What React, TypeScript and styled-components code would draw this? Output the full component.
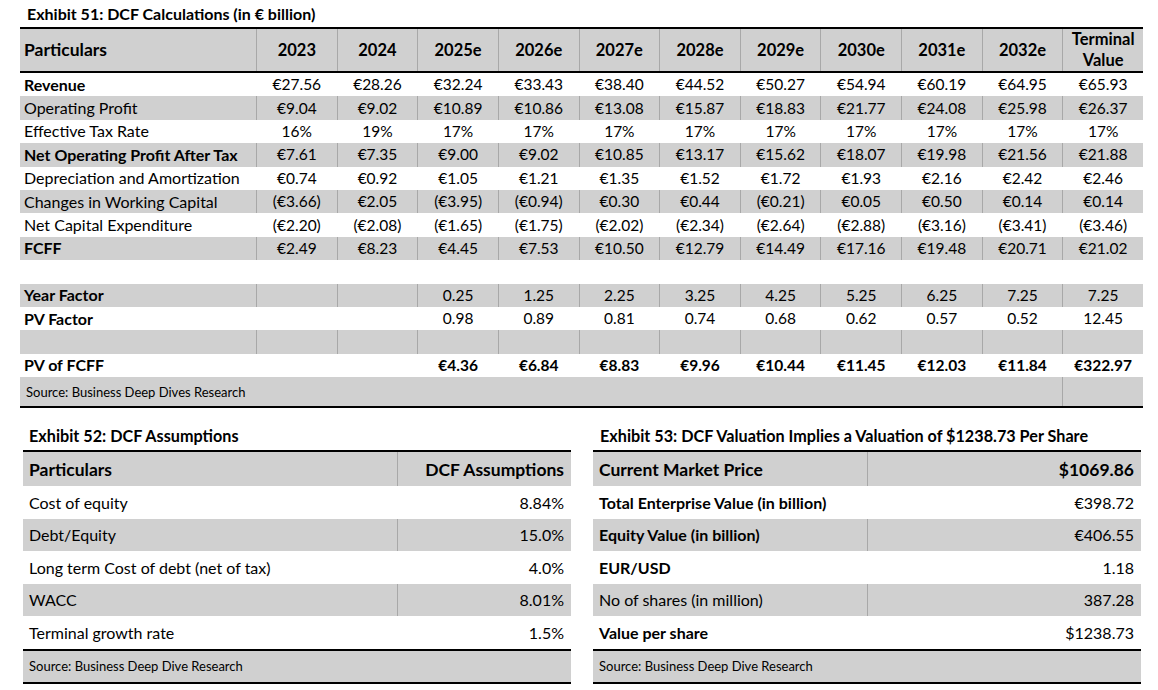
import styled, { createGlobalStyle } from 'styled-components';

const SHADE = '#d0d0d0';
const RULE = '#a8a8a8';

const GlobalStyle = createGlobalStyle`
  body {
    margin: 0;
    background: #ffffff;
    color: #000000;
    font-family: Lato, 'Liberation Sans', sans-serif;
  }
`;

type CalcRowData = {
  label: string;
  values: string[];
  shade?: boolean;
  bold?: boolean;
  boldValues?: boolean;
};

const years = ['2023', '2024', '2025e', '2026e', '2027e', '2028e', '2029e', '2030e', '2031e', '2032e'];
const empty = Array(11).fill('');

const calcRows: CalcRowData[] = [
  { label: 'Revenue', bold: true, values: ['€27.56', '€28.26', '€32.24', '€33.43', '€38.40', '€44.52', '€50.27', '€54.94', '€60.19', '€64.95', '€65.93'] },
  { label: 'Operating Profit', shade: true, values: ['€9.04', '€9.02', '€10.89', '€10.86', '€13.08', '€15.87', '€18.83', '€21.77', '€24.08', '€25.98', '€26.37'] },
  { label: 'Effective Tax Rate', values: ['16%', '19%', '17%', '17%', '17%', '17%', '17%', '17%', '17%', '17%', '17%'] },
  { label: 'Net Operating Profit After Tax', bold: true, shade: true, values: ['€7.61', '€7.35', '€9.00', '€9.02', '€10.85', '€13.17', '€15.62', '€18.07', '€19.98', '€21.56', '€21.88'] },
  { label: 'Depreciation and Amortization', values: ['€0.74', '€0.92', '€1.05', '€1.21', '€1.35', '€1.52', '€1.72', '€1.93', '€2.16', '€2.42', '€2.46'] },
  { label: 'Changes in Working Capital', shade: true, values: ['(€3.66)', '€2.05', '(€3.95)', '(€0.94)', '€0.30', '€0.44', '(€0.21)', '€0.05', '€0.50', '€0.14', '€0.14'] },
  { label: 'Net Capital Expenditure', values: ['(€2.20)', '(€2.08)', '(€1.65)', '(€1.75)', '(€2.02)', '(€2.34)', '(€2.64)', '(€2.88)', '(€3.16)', '(€3.41)', '(€3.46)'] },
  { label: 'FCFF', bold: true, shade: true, values: ['€2.49', '€8.23', '€4.45', '€7.53', '€10.50', '€12.79', '€14.49', '€17.16', '€19.48', '€20.71', '€21.02'] },
  { label: '', values: empty },
  { label: 'Year Factor', bold: true, shade: true, values: ['', '', '0.25', '1.25', '2.25', '3.25', '4.25', '5.25', '6.25', '7.25', '7.25'] },
  { label: 'PV Factor', bold: true, values: ['', '', '0.98', '0.89', '0.81', '0.74', '0.68', '0.62', '0.57', '0.52', '12.45'] },
  { label: '', shade: true, values: empty },
  { label: 'PV of FCFF', bold: true, boldValues: true, values: ['', '', '€4.36', '€6.84', '€8.83', '€9.96', '€10.44', '€11.45', '€12.03', '€11.84', '€322.97'] },
];

const assumptions = [
  ['Cost of equity', '8.84%'],
  ['Debt/Equity', '15.0%'],
  ['Long term Cost of debt (net of tax)', '4.0%'],
  ['WACC', '8.01%'],
  ['Terminal growth rate', '1.5%'],
];

const valuation: { label: string; value: string; bold: boolean }[] = [
  { label: 'Total Enterprise Value (in billion)', value: '€398.72', bold: true },
  { label: 'Equity Value (in billion)', value: '€406.55', bold: true },
  { label: 'EUR/USD', value: '1.18', bold: true },
  { label: 'No of shares (in million)', value: '387.28', bold: false },
  { label: 'Value per share', value: '$1238.73', bold: true },
];

const App = () => {
  return (
    <Page>
      <GlobalStyle />
      <TopSection>
        <Title>Exhibit 51: DCF Calculations (in € billion)</Title>
        <CalcTable>
          <CalcHead $shade>
            <Label $bold $size={17.5}>Particulars</Label>
            {years.map((y) => (
              <Value key={y} $bold $size={16.5}>{y}</Value>
            ))}
            <Value $bold $size={16.5}>Terminal<br />Value</Value>
          </CalcHead>
          {calcRows.map((row, i) => (
            <CalcRow key={i} $shade={row.shade}>
              <Label $bold={row.bold}>{row.label}</Label>
              {row.values.map((v, j) => (
                <Value key={j} $bold={row.boldValues}>{v}</Value>
              ))}
            </CalcRow>
          ))}
          <SourceRow $shade>
            <SourceText>Source: Business Deep Dives Research</SourceText>
            <div />
          </SourceRow>
        </CalcTable>
      </TopSection>

      <BottomSection>
        <Exhibit>
          <SmallTitle>Exhibit 52: DCF Assumptions</SmallTitle>
          <BoxTable>
            <BoxHead $cols='374px 1fr' $shade>
              <BoxLabel $bold $size={17.5}>Particulars</BoxLabel>
              <BoxValue $bold $size={17.5}>DCF Assumptions</BoxValue>
            </BoxHead>
            {assumptions.map(([label, value], i) => (
              <BoxRow key={label} $cols='374px 1fr' $shade={i % 2 === 1}>
                <BoxLabel>{label}</BoxLabel>
                <BoxValue>{value}</BoxValue>
              </BoxRow>
            ))}
            <BoxSource>Source: Business Deep Dive Research</BoxSource>
          </BoxTable>
        </Exhibit>

        <Exhibit>
          <SmallTitle $indent={7}>Exhibit 53: DCF Valuation Implies a Valuation of $1238.73 Per Share</SmallTitle>
          <BoxTable>
            <BoxHead $cols='274px 1fr' $shade>
              <BoxLabel $bold $size={17.5}>Current Market Price</BoxLabel>
              <BoxValue $bold $size={17.5}>$1069.86</BoxValue>
            </BoxHead>
            {valuation.map((row, i) => (
              <BoxRow key={row.label} $cols='274px 1fr' $shade={i % 2 === 1}>
                <BoxLabel $bold={row.bold}>{row.label}</BoxLabel>
                <BoxValue>{row.value}</BoxValue>
              </BoxRow>
            ))}
            <BoxSource>Source: Business Deep Dive Research</BoxSource>
          </BoxTable>
        </Exhibit>
      </BottomSection>
    </Page>
  );
};

const Page = styled.main`
  width: 1158px;
  height: 690px;
  overflow: hidden;
`;

const TopSection = styled.section`
  padding: 0 15px 0 20px;
`;

const Title = styled.h2`
  margin: 0;
  height: 27px;
  display: flex;
  align-items: center;
  padding-left: 7px;
  font-size: 16px;
  font-weight: 700;
`;

const CalcTable = styled.div`
  border-top: 2px solid #000;
  border-bottom: 2px solid #000;
`;

const CalcRow = styled.div<{ $shade?: boolean }>`
  display: grid;
  grid-template-columns: 236px repeat(11, 1fr);
  height: 23.4px;
  background: ${(p) => (p.$shade ? SHADE : '#ffffff')};

  & > * + * {
    border-left: 1px solid ${(p) => (p.$shade ? RULE : 'transparent')};
  }
`;

const CalcHead = styled(CalcRow)`
  height: 42px;
  border-bottom: 2px solid #000;
`;

const SourceRow = styled(CalcRow)`
  height: 29px;

  & > :first-child {
    grid-column: 1 / span 11;
  }
`;

const Label = styled.div<{ $bold?: boolean; $size?: number }>`
  display: flex;
  align-items: center;
  padding-left: 4px;
  white-space: nowrap;
  line-height: 20px;
  font-size: ${(p) => p.$size ?? 16}px;
  font-weight: ${(p) => (p.$bold ? 700 : 400)};
`;

const Value = styled.div<{ $bold?: boolean; $size?: number }>`
  display: flex;
  align-items: center;
  justify-content: center;
  text-align: center;
  white-space: nowrap;
  line-height: 21px;
  font-size: ${(p) => p.$size ?? 15.5}px;
  font-weight: ${(p) => (p.$bold ? 700 : 400)};
`;

const SourceText = styled.div`
  display: flex;
  align-items: center;
  padding-left: 6px;
  font-size: 13px;
`;

const BottomSection = styled.section`
  display: grid;
  grid-template-columns: 548px 548px;
  column-gap: 22px;
  padding-left: 23px;
  margin-top: 12px;
`;

const Exhibit = styled.div`
  display: flex;
  flex-direction: column;
`;

const SmallTitle = styled.h3<{ $indent?: number }>`
  margin: 0;
  height: 30px;
  display: flex;
  align-items: center;
  padding-left: ${(p) => p.$indent ?? 6}px;
  font-size: 16.2px;
  font-weight: 700;
  white-space: nowrap;
`;

const BoxTable = styled.div`
  border-top: 2px solid #000;
`;

const BoxRow = styled.div<{ $cols: string; $shade?: boolean }>`
  display: grid;
  grid-template-columns: ${(p) => p.$cols};
  height: 32.5px;
  background: ${(p) => (p.$shade ? SHADE : '#ffffff')};

  & > * + * {
    border-left: 1px solid ${(p) => (p.$shade ? RULE : 'transparent')};
  }
`;

const BoxHead = styled(BoxRow)`
  height: 34px;
`;

const BoxLabel = styled.div<{ $bold?: boolean; $size?: number }>`
  display: flex;
  align-items: center;
  padding-left: 6px;
  white-space: nowrap;
  font-size: ${(p) => p.$size ?? 16}px;
  font-weight: ${(p) => (p.$bold ? 700 : 400)};
`;

const BoxValue = styled(BoxLabel)`
  justify-content: flex-end;
  padding: 0 7px 0 0;
`;

const BoxSource = styled.div`
  height: 31px;
  display: flex;
  align-items: center;
  padding-left: 6px;
  background: ${SHADE};
  border-top: 2px solid #000;
  border-bottom: 2px solid #000;
  font-size: 13px;
`;

export default App;
